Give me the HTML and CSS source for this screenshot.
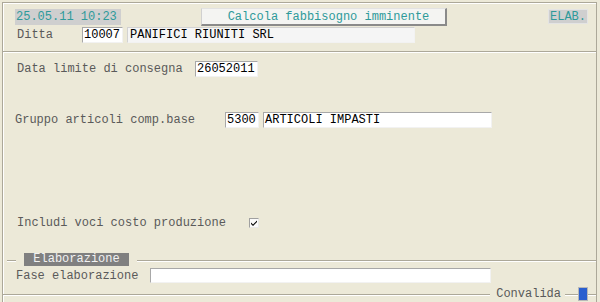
FILE: index.html
```html
<!DOCTYPE html>
<html>
<head>
<meta charset="utf-8">
<link rel="stylesheet" href="styles.css">
</head>
<body>
<div class="frame">
  <div class="header">
    <div class="row1">
      <div class="clock">25.05.11 10:23</div>
      <div class="button">Calcola fabbisogno imminente</div>
      <div class="status">ELAB.</div>
    </div>
    <div class="row2">
      <span class="label w-ditta">Ditta</span>
      <span class="field f-ditta">10007</span>
      <span class="field ro f-name">PANIFICI RIUNITI SRL</span>
    </div>
  </div>
  <div class="main">
    <div class="row r-data">
      <span class="label w-data">Data limite di consegna</span>
      <span class="field f-data">26052011</span>
    </div>
    <div class="row r-gruppo">
      <span class="label w-gruppo">Gruppo articoli comp.base</span>
      <span class="field f-code">5300</span>
      <span class="field f-desc">ARTICOLI IMPASTI</span>
    </div>
    <div class="row r-includi">
      <span class="label w-includi">Includi voci costo produzione</span>
      <span class="check"><svg width="8" height="8" viewBox="0 0 8 8"><path d="M1 3.5 L3 5.5 L7 1.5 L7 3 L3 7 L1 5 Z" fill="#000"/></svg></span>
    </div>
    <div class="legend-row">
      <div class="gline short"></div>
      <div class="legend">Elaborazione</div>
      <div class="gline grow"></div>
    </div>
    <div class="row r-fase">
      <span class="label w-fase">Fase elaborazione</span>
      <span class="field f-fase"></span>
    </div>
    <div class="footer">
      <div class="gline grow"></div>
      <span class="convalida">Convalida</span>
      <div class="gline w13"></div>
      <div class="blue"></div>
      <div class="gline w8"></div>
    </div>
  </div>
</div>
</body>
</html>
```
FILE: styles.css
```css
html, body {
  margin: 0;
  padding: 0;
}
body {
  width: 600px;
  height: 302px;
  overflow: hidden;
  background: #ECE9D8;
  font-family: "Liberation Mono", "Courier New", monospace;
  font-size: 12px;
  color: #000;
}
.frame {
  margin: 2px 3px 0 2px;
  height: 300px;
  box-sizing: border-box;
  border-top: 1px solid #ACA899;
  border-left: 1px solid #ACA899;
  border-right: 1px solid #ACA899;
  box-shadow: inset 1px 1px 0 #fff;
  display: flex;
  flex-direction: column;
}
.header {
  height: 50px;
  box-sizing: border-box;
  padding-top: 5px;
  border-bottom: 1px solid #ACA899;
  box-shadow: 0 1px 0 #fff;
}
.row1 {
  display: flex;
  height: 18px;
}
.clock {
  margin: 1px 0 0 12px;
  width: 106px;
  height: 16px;
  line-height: 16px;
  background: #CFCFCF;
  color: #2E9A9A;
  padding-left: 1px;
  box-sizing: border-box;
}
.button {
  margin-left: 80px;
  width: 246px;
  height: 18px;
  line-height: 16px;
  box-sizing: border-box;
  background: #F4F4F2;
  border-top: 1px solid #E2E2E2;
  border-left: 1px solid #D0D0D0;
  border-right: 2px solid #8A8A8A;
  border-bottom: 2px solid #8A8A8A;
  color: #2E9A9A;
  text-align: center;
  padding-left: 10px;
}
.status {
  margin: 1px 0 0 101px;
  width: 40px;
  height: 15px;
  line-height: 15px;
  box-sizing: border-box;
  background: #CFCFCF;
  border: 1px solid #E4E4E4;
  color: #2E9A9A;
  padding-left: 1px;
}
.row2 {
  display: flex;
  align-items: center;
  margin-top: 1px;
  height: 16px;
  padding-left: 14px;
}
.label {
  color: #5A5A5A;
  white-space: nowrap;
}
.w-ditta { width: 65px; }
.field {
  display: block;
  height: 16px;
  line-height: 15px;
  box-sizing: border-box;
  background: #fff;
  border-top: 1px solid #A8A8A8;
  border-left: 1px solid #A8A8A8;
  border-right: 1px solid #F2F2F2;
  border-bottom: 1px solid #F2F2F2;
  padding-left: 1px;
  white-space: nowrap;
  overflow: hidden;
}
.f-ditta { width: 41px; }
.ro {
  background: #F5F5F5;
  border-top-color: #D2D2D2;
  border-left-color: #D2D2D2;
}
.f-name { width: 288px; margin-left: 4px; padding-left: 2px; }
.main {
  display: flex;
  flex-direction: column;
}
.row {
  display: flex;
  align-items: center;
  height: 16px;
  padding-left: 14px;
}
.r-data { margin-top: 9px; }
.w-data { width: 178px; }
.f-data { width: 63px; }
.r-gruppo { margin-top: 35px; padding-left: 12px; }
.w-gruppo { width: 210px; }
.f-code { width: 34px; }
.f-desc { width: 229px; margin-left: 4px; }
.r-includi { margin-top: 87px; }
.w-includi { width: 232px; }
.check {
  width: 10px;
  height: 10px;
  box-sizing: border-box;
  background: #FAFAFA;
  border-top: 1px solid #A0A0A0;
  border-left: 1px solid #A0A0A0;
  border-right: 1px solid #E8E8E8;
  border-bottom: 1px solid #E8E8E8;
  display: flex;
  align-items: center;
  justify-content: center;
}
.check svg { display: block; }
.legend-row {
  display: flex;
  margin-top: 22px;
  height: 13px;
}
.gline {
  height: 1px;
  margin-top: 7px;
  background: #ACA899;
  box-shadow: 0 1px 0 #fff;
}
.short { width: 9px; margin-left: 4px; }
.grow { flex: 1; }
.legend {
  margin-left: 8px;
  width: 105px;
  height: 13px;
  line-height: 12px;
  background: #808080;
  color: #F2F2F2;
  text-align: center;
  margin-right: 8px;
}
.r-fase { margin-top: 2px; height: 15px; padding-left: 13px; }
.w-fase { width: 134px; }
.f-fase { width: 341px; height: 15px; }
.footer {
  display: flex;
  margin-top: 3px;
  height: 16px;
}
.footer .gline { margin-top: 8px; }
.convalida {
  color: #5A5A5A;
  margin: 1px 4px 0 6px;
  line-height: 14px;
}
.w13 { width: 13px; }
.w8 { width: 8px; }
.blue {
  width: 10px;
  height: 14px;
  margin-top: 1px;
  box-sizing: border-box;
  background: #2A5FCF;
  border: 1px solid #B8B8B8;
}
```
